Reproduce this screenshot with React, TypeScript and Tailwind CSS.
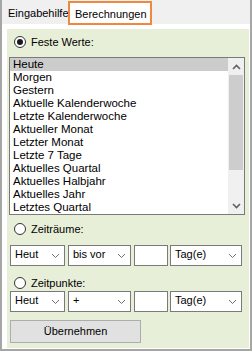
import React from 'react';

const items = [
  'Heute',
  'Morgen',
  'Gestern',
  'Aktuelle Kalenderwoche',
  'Letzte Kalenderwoche',
  'Aktueller Monat',
  'Letzter Monat',
  'Letzte 7 Tage',
  'Aktuelles Quartal',
  'Aktuelles Halbjahr',
  'Aktuelles Jahr',
  'Letztes Quartal',
];

const Chevron = ({ up = false, bold = false }: { up?: boolean; bold?: boolean }) => (
  <svg width="9" height="6" viewBox="0 0 9 6" className="shrink-0">
    <polyline
      points={up ? '1,5 4.5,1.5 8,5' : '1,1 4.5,4.5 8,1'}
      fill="none"
      stroke={bold ? '#606060' : '#707070'}
      strokeWidth={bold ? 1.6 : 1}
    />
  </svg>
);

const Radio = ({ checked, label }: { checked?: boolean; label: string }) => (
  <div className="flex items-center h-[12px] ml-[5px]">
    <div className="w-[12px] h-[12px] rounded-full border border-[#333333] bg-white flex items-center justify-center shrink-0">
      {checked && <div className="w-[6px] h-[6px] rounded-full bg-[#1a1a1a]"></div>}
    </div>
    <span className="ml-[5px] leading-none">{label}</span>
  </div>
);

const Select = ({ value, width }: { value: string; width: string }) => (
  <div className={`${width} h-[21px] border border-[#7a7a7a] bg-white flex items-center justify-between pl-[4px] pr-[4px] shrink-0`}>
    <span className="leading-none -mt-[2px]">{value}</span>
    <Chevron />
  </div>
);

export default function App() {
  return (
    <div className="w-[252px] h-[351px] bg-white border-x-2 border-b-2 border-[#a6a6a6] flex flex-col overflow-hidden font-['Liberation_Sans',Arial,sans-serif] text-[11px] text-black">
      <div className="h-[24px] bg-[#f0f0f0] flex items-start shrink-0 relative z-10">
        <div className="w-[65px] h-[24px] flex items-center pl-[5px] pt-[3px] ml-[1px]">
          <span>Eingabehilfe</span>
        </div>
        <div className="w-[84px] h-[24px] mt-[1px] border-2 border-[#f0883e] bg-white flex items-start pl-[5px] pt-[3px]">
          <span>Berechnungen</span>
        </div>
      </div>

      <div className="flex-1 pl-[5px] pt-[5px] pr-[1px] pb-[1px] flex">
        <div className="flex-1 bg-[#e8efd9] flex flex-col px-[2px]">
          <div className="mt-[7px]">
            <Radio checked label="Feste Werte:" />
          </div>

          <div className="mt-[9px] w-[236px] h-[158px] border border-[#7a7a7a] bg-white flex">
            <div className="flex-1 flex flex-col text-[11.5px]">
              {items.map((item, i) => (
                <div
                  key={item}
                  className={`h-[13px] flex items-center pl-[3px] leading-none ${i === 0 ? 'bg-[#cccccc]' : ''}`}
                >
                  {item}
                </div>
              ))}
            </div>
            <div className="w-[16px] bg-[#f0f0f0] flex flex-col">
              <div className="h-[17px] flex items-center justify-center">
                <Chevron up bold />
              </div>
              <div className="h-[95px] mx-[1px] bg-[#cdcdcd]"></div>
              <div className="flex-1"></div>
              <div className="h-[17px] flex items-center justify-center">
                <Chevron bold />
              </div>
            </div>
          </div>

          <div className="mt-[8px]">
            <Radio label="Zeiträume:" />
          </div>

          <div className="mt-[10px] flex items-center ml-[1px]">
            <Select value="Heut" width="w-[55px]" />
            <div className="w-[3px]"></div>
            <Select value="bis vor" width="w-[63px]" />
            <div className="w-[3px] shrink-0"></div>
            <div className="w-[34px] h-[21px] border border-[#7a7a7a] bg-white shrink-0"></div>
            <div className="w-[2px] shrink-0"></div>
            <Select value="Tag(e)" width="w-[72px]" />
          </div>

          <div className="mt-[11px]">
            <Radio label="Zeitpunkte:" />
          </div>

          <div className="mt-[2px] flex items-center ml-[1px]">
            <Select value="Heut" width="w-[55px]" />
            <div className="w-[3px]"></div>
            <Select value="+" width="w-[63px]" />
            <div className="w-[3px] shrink-0"></div>
            <div className="w-[34px] h-[21px] border border-[#7a7a7a] bg-white shrink-0"></div>
            <div className="w-[2px] shrink-0"></div>
            <Select value="Tag(e)" width="w-[72px]" />
          </div>

          <div className="mt-[8px] ml-[1px] w-[131px] h-[23px] bg-[#e1e1e1] border border-[#adadad] flex items-center justify-center">
            <span className="leading-none">Übernehmen</span>
          </div>
        </div>
      </div>
    </div>
  );
}
